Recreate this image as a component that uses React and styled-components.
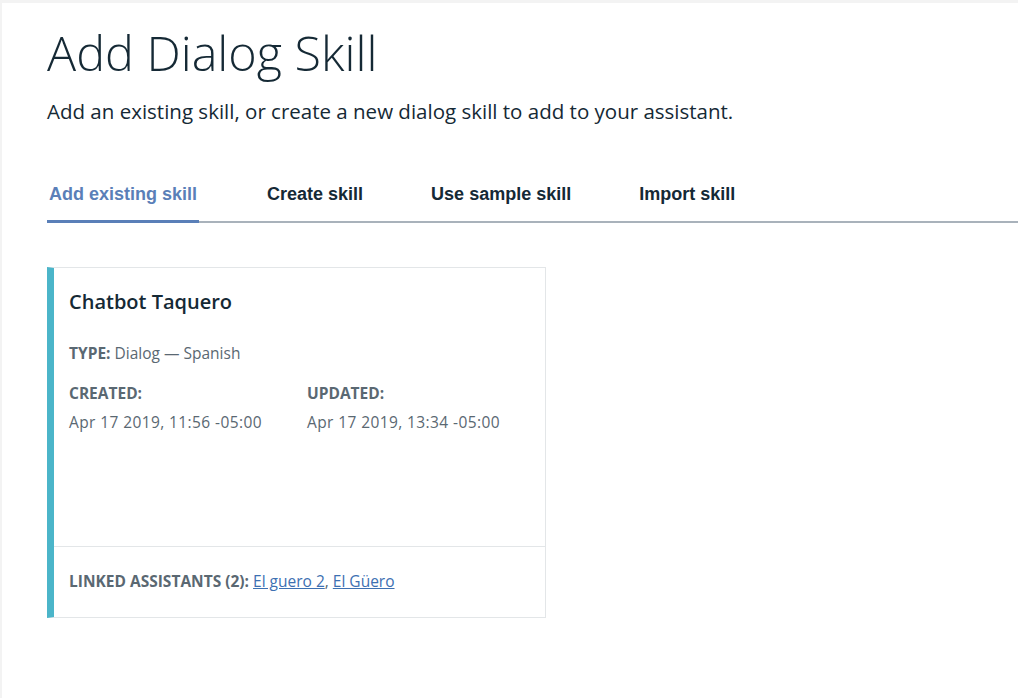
import React from "react";
import styled, { createGlobalStyle, css } from "styled-components";

const GlobalStyle = createGlobalStyle`
    html, body {
        margin: 0;
        padding: 0;
        background: #f3f3f3;
        font-family: "Open Sans", "Liberation Sans", sans-serif;
        color: #152935;
    }
    #root {
        min-height: 100vh;
    }
`;

const tabs = ["Add existing skill", "Create skill", "Use sample skill", "Import skill"];

function App() {
    return (
        <>
            <GlobalStyle />
            <Page>
                <Panel>
                    <Title>Add Dialog Skill</Title>
                    <Subtitle>Add an existing skill, or create a new dialog skill to add to your assistant.</Subtitle>
                    <TabList>
                        {tabs.map((t, i) => (
                            <Tab key={t} active={i === 0}>
                                {t}
                            </Tab>
                        ))}
                    </TabList>
                    <Card>
                        <CardBody>
                            <CardTitle>Chatbot Taquero</CardTitle>
                            <Meta>
                                <Label>TYPE:</Label> Dialog — Spanish
                            </Meta>
                            <Dates>
                                <DateCol>
                                    <Label>CREATED:</Label>
                                    <DateValue>Apr 17 2019, 11:56 -05:00</DateValue>
                                </DateCol>
                                <DateCol>
                                    <Label>UPDATED:</Label>
                                    <DateValue>Apr 17 2019, 13:34 -05:00</DateValue>
                                </DateCol>
                            </Dates>
                        </CardBody>
                        <CardFooter>
                            <Label>LINKED ASSISTANTS (2):</Label> <Link href="#">El guero 2</Link>,{" "}
                            <Link href="#">El Güero</Link>
                        </CardFooter>
                    </Card>
                </Panel>
            </Page>
        </>
    );
}

const Page = styled.div`
    padding: 3px 0 0 2px;
    min-height: 100vh;
    box-sizing: border-box;
    display: flex;
`;

const Panel = styled.main`
    flex: 1;
    background: #ffffff;
    padding: 19px 0 0 45px;
`;

const Title = styled.h1`
    margin: 0;
    font-weight: 300;
    font-size: 48.5px;
    line-height: 60px;
    color: #152935;
`;

const Subtitle = styled.p`
    margin: 15px 0 0;
    font-size: 20.5px;
    line-height: 28px;
    color: #152935;
`;

const TabList = styled.nav`
    display: flex;
    margin-top: 57px;
    border-bottom: 2px solid #a9b2bb;
    gap: 68px;
    padding-left: 2px;
`;

const Tab = styled.div`
    font-family: "Liberation Sans", Arial, sans-serif;
    font-weight: 700;
    font-size: 18px;
    line-height: 24px;
    padding-bottom: 17px;
    margin-bottom: -2px;
    color: #152935;
    ${(p) =>
        p.active &&
        css`
            color: #5a7fb8;
            box-shadow: inset 0 -3px 0 #5a7fb8;
            margin-left: -2px;
            padding: 0 2px 17px;
        `}
`;

const Card = styled.section`
    margin-top: 44px;
    width: 499px;
    height: 351px;
    box-sizing: border-box;
    border: 1px solid #e3e6e8;
    border-left: 7px solid #4bb5c9;
    display: flex;
    flex-direction: column;
`;

const CardBody = styled.div`
    flex: 1;
    padding: 20px 15px 0 15px;
`;

const CardTitle = styled.h2`
    margin: 0;
    font-size: 20px;
    line-height: 28px;
    font-weight: 600;
    color: #152935;
`;

const Label = styled.span`
    font-weight: 700;
    color: #5a6872;
`;

const Meta = styled.div`
    margin-top: 27px;
    font-size: 15.5px;
    line-height: 20px;
    color: #5a6872;
`;

const Dates = styled.div`
    display: grid;
    grid-template-columns: 238px 1fr;
    margin-top: 20px;
    font-size: 15.5px;
    line-height: 20px;
`;

const DateCol = styled.div`
    display: flex;
    flex-direction: column;
    gap: 9px;
`;

const DateValue = styled.span`
    color: #5a6872;
    letter-spacing: 0.4px;
`;

const CardFooter = styled.div`
    border-top: 1px solid #e3e6e8;
    height: 71px;
    box-sizing: border-box;
    padding: 24px 15px 0;
    font-size: 15.5px;
    line-height: 20px;
    color: #5a6872;
`;

const Link = styled.a`
    color: #3d70b2;
    text-decoration: underline;
`;

export default App;
